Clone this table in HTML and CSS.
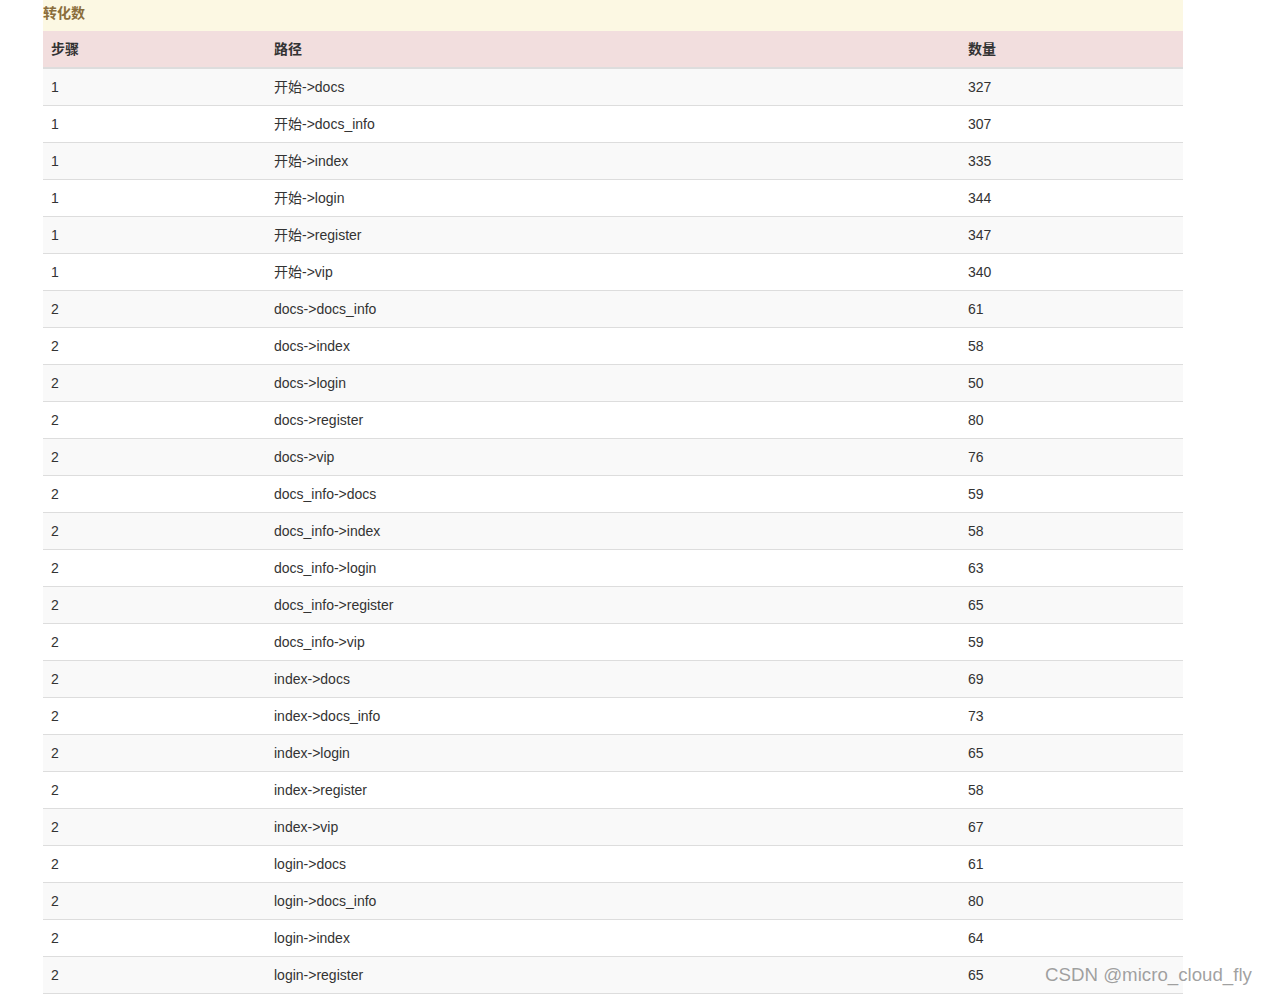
FILE: index.html
```html
<!DOCTYPE html>
<html lang="zh">
<head>
<meta charset="utf-8">
<title>转化数</title>
<link rel="stylesheet" href="styles.css">
</head>
<body>
<div class="wrap">
  <table class="tbl">
    <caption class="cap">转化数</caption>
    <thead>
      <tr class="head"><th class="c1">步骤</th><th class="c2">路径</th><th class="c3">数量</th></tr>
    </thead>
    <tbody>
      <tr><td>1</td><td>开始-&gt;docs</td><td>327</td></tr>
      <tr><td>1</td><td>开始-&gt;docs_info</td><td>307</td></tr>
      <tr><td>1</td><td>开始-&gt;index</td><td>335</td></tr>
      <tr><td>1</td><td>开始-&gt;login</td><td>344</td></tr>
      <tr><td>1</td><td>开始-&gt;register</td><td>347</td></tr>
      <tr><td>1</td><td>开始-&gt;vip</td><td>340</td></tr>
      <tr><td>2</td><td>docs-&gt;docs_info</td><td>61</td></tr>
      <tr><td>2</td><td>docs-&gt;index</td><td>58</td></tr>
      <tr><td>2</td><td>docs-&gt;login</td><td>50</td></tr>
      <tr><td>2</td><td>docs-&gt;register</td><td>80</td></tr>
      <tr><td>2</td><td>docs-&gt;vip</td><td>76</td></tr>
      <tr><td>2</td><td>docs_info-&gt;docs</td><td>59</td></tr>
      <tr><td>2</td><td>docs_info-&gt;index</td><td>58</td></tr>
      <tr><td>2</td><td>docs_info-&gt;login</td><td>63</td></tr>
      <tr><td>2</td><td>docs_info-&gt;register</td><td>65</td></tr>
      <tr><td>2</td><td>docs_info-&gt;vip</td><td>59</td></tr>
      <tr><td>2</td><td>index-&gt;docs</td><td>69</td></tr>
      <tr><td>2</td><td>index-&gt;docs_info</td><td>73</td></tr>
      <tr><td>2</td><td>index-&gt;login</td><td>65</td></tr>
      <tr><td>2</td><td>index-&gt;register</td><td>58</td></tr>
      <tr><td>2</td><td>index-&gt;vip</td><td>67</td></tr>
      <tr><td>2</td><td>login-&gt;docs</td><td>61</td></tr>
      <tr><td>2</td><td>login-&gt;docs_info</td><td>80</td></tr>
      <tr><td>2</td><td>login-&gt;index</td><td>64</td></tr>
      <tr><td>2</td><td>login-&gt;register</td><td>65</td></tr>
    </tbody>
  </table>
</div>
<div class="watermark">CSDN @micro_cloud_fly</div>
</body>
</html>
```
FILE: styles.css
```css
html, body {
  margin: 0;
  padding: 0;
  background: #fff;
}
body {
  font-family: "Liberation Sans", "Noto Sans CJK SC", Arial, sans-serif;
  font-size: 14px;
  line-height: 20px;
  color: #333;
}
.wrap {
  padding-left: 43px;
  width: 1140px;
}
.tbl {
  width: 1140px;
  border-collapse: collapse;
  border-spacing: 0;
}
.cap {
  caption-side: top;
  text-align: left;
  background: #fcf8e3;
  color: #8a6d3b;
  font-weight: bold;
  padding: 3px 0 8px 0;
  line-height: 20px;
}
.head {
  background: #f2dede;
}
.tbl th {
  text-align: left;
  font-weight: bold;
  padding: 8px;
  line-height: 20px;
  border-bottom: 2px solid #ddd;
}
.c1 { width: 207px; }
.c2 { width: 678px; }
.c3 { width: 207px; }
.tbl td {
  padding: 8px;
  line-height: 20px;
  border-bottom: 1px solid #ddd;
}
.tbl tbody tr:nth-child(odd) {
  background: #f9f9f9;
}
.watermark {
  position: absolute;
  left: 1045px;
  top: 963px;
  font-family: "Liberation Sans", Arial, sans-serif;
  font-size: 18.7px;
  line-height: 24px;
  color: rgba(130, 130, 130, 0.75);
  white-space: nowrap;
}
```
